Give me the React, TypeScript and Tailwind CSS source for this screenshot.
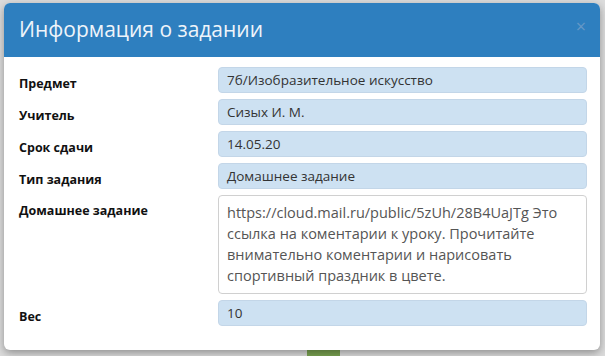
import React from 'react';

const rows = [
  { label: 'Предмет', value: '7б/Изобразительное искусство' },
  { label: 'Учитель', value: 'Сизых И. М.' },
  { label: 'Срок сдачи', value: '14.05.20' },
  { label: 'Тип задания', value: 'Домашнее задание' },
];

const Field = ({ label, value }: { label: string; value: string }) => (
  <div className="flex h-[26px] items-start">
    <div className="w-[199px] pt-[8px] text-[12.5px] font-bold leading-[18px] text-[#111]">{label}</div>
    <div className="h-[26px] w-[369px] rounded-[4px] border border-[#c3d6e8] bg-[#cde1f2] px-[8px] text-[13.5px] leading-[24px] text-[#333]">
      {value}
    </div>
  </div>
);

export default function App() {
  return (
    <div
      className="relative h-[356px] w-[605px] overflow-hidden bg-[#dcdcdc]"
      style={{ fontFamily: '"Open Sans", "Noto Sans", sans-serif' }}
    >
      <div className="absolute bottom-0 left-[307px] h-[8px] w-[33px] bg-[#7aa351]" />
      <div className="absolute left-[4px] top-[3px] h-[347px] w-[596px] overflow-hidden rounded-[6px] bg-white shadow-[0_3px_8px_rgba(0,0,0,0.35)]">
        <div className="flex h-[54px] items-center justify-between bg-[#2e7fbf] pl-[15px] pr-[14px]">
          <h2 className="text-[21px] text-[#eef4fa]">Информация о задании</h2>
          <span className="mt-[-8px] text-[18px] leading-none text-[#6598c6]">×</span>
        </div>
        <div className="flex flex-col gap-[6px] pl-[15px] pt-[10px]">
          {rows.map((r) => (
            <Field key={r.label} label={r.label} value={r.value} />
          ))}
          <div className="flex items-start">
            <div className="w-[199px] pt-[7px] text-[12.5px] font-bold leading-[18px] text-[#111]">Домашнее задание</div>
            <div className="h-[99px] w-[369px] rounded-[4px] border border-[#d0d0d0] bg-white px-[8px] pt-[6px] text-[14.5px] leading-[21px] text-[#555]">
              https://cloud.mail.ru/public/5zUh/28B4UaJTg Это ссылка на коментарии к уроку. Прочитайте внимательно коментарии и нарисовать спортивный праздник в цвете.
            </div>
          </div>
          <Field label="Вес" value="10" />
        </div>
      </div>
    </div>
  );
}
